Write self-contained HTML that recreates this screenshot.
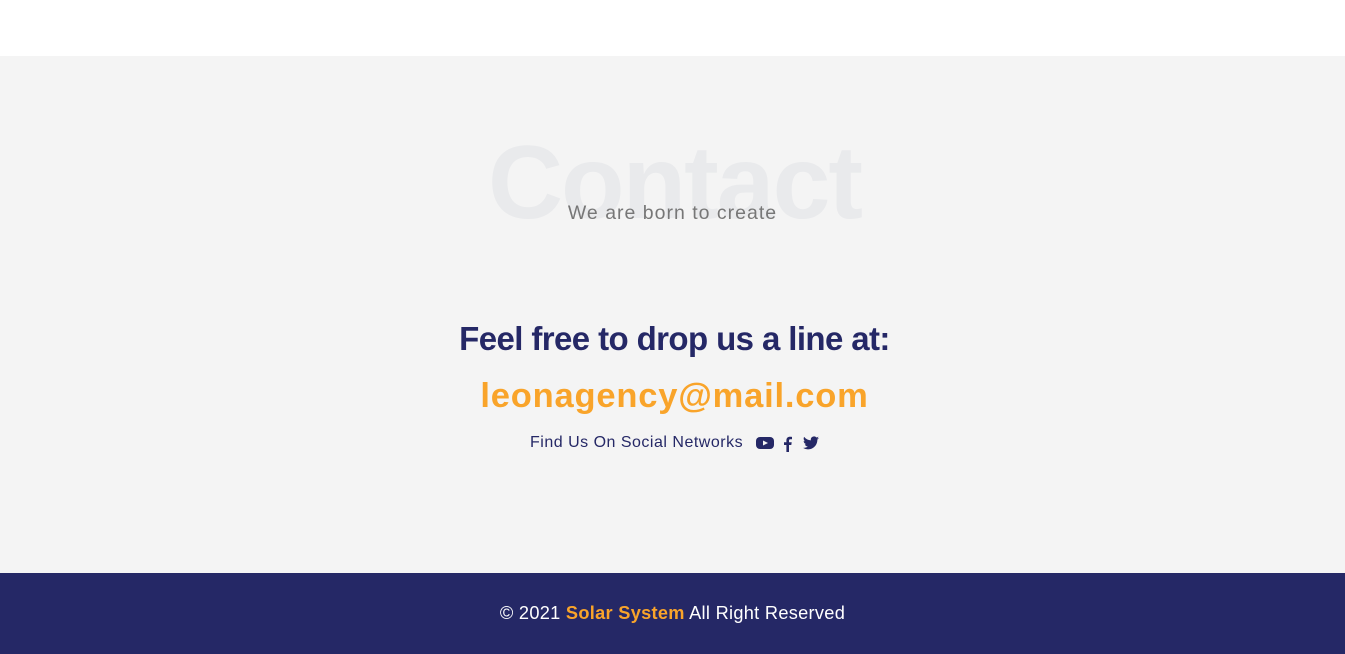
<!DOCTYPE html>
<html><head><style>
body{margin:0;width:1345px;height:654px;overflow:hidden;background:#fff;font-family:"Liberation Sans",sans-serif}
.sec{position:absolute;top:56px;left:0;width:1345px;height:517px;background:#f4f4f4}
.big{position:absolute;top:123px;left:0;width:1345px;text-align:center;font-size:104px;font-weight:bold;color:#e9eaec;letter-spacing:-2px;line-height:120px;padding-left:4px;box-sizing:border-box}
.sub{position:absolute;top:202px;left:0;width:1345px;text-align:center;font-size:19.5px;color:#777;letter-spacing:1px}
.h{position:absolute;top:320px;left:0;width:1345px;text-align:center;font-size:33px;font-weight:bold;color:#252866;letter-spacing:-0.6px;padding-left:4px;box-sizing:border-box}
.m{position:absolute;top:377px;left:0;width:1345px;text-align:center;font-size:34.5px;font-weight:bold;color:#f9a42a;letter-spacing:0.8px;padding-left:4px;box-sizing:border-box}
.s{position:absolute;top:434px;left:530px;font-size:16px;color:#252866;letter-spacing:0.5px;white-space:nowrap}
.ic{position:absolute;top:436px}
.f{position:absolute;top:573px;left:0;width:1345px;height:81px;background:#252866;color:#fff;text-align:center;font-size:18.2px;line-height:80px;letter-spacing:0.3px}
.f b{color:#f9a42a}
</style></head><body>
<div class="sec"></div>
<div class="big">Contact</div>
<div class="sub">We are born to create</div>
<div class="h">Feel free to drop us a line at:</div>
<div class="m">leonagency@mail.com</div>
<div class="s">Find Us On Social Networks</div>
<svg class="ic" style="left:756px" width="18" height="14" viewBox="0 0 18 14"><rect x="0" y="1" width="18" height="12" rx="4" fill="#252866"/><path d="M7 4.5 L12 7 L7 9.5Z" fill="#f4f4f4"/></svg>
<svg class="ic" style="left:783px" width="9" height="16" viewBox="0 0 9 16"><path d="M6 16V9h2.3l.4-2.7H6V4.6c0-.8.3-1.3 1.4-1.3H9V.9C8.6.8 7.8.7 6.9.7 4.9.7 3.4 1.9 3.4 4.2v2.1H1V9h2.4v7z" fill="#252866"/></svg>
<svg class="ic" style="left:803px" width="16" height="14" viewBox="0 0 24 20"><path d="M24 2.4a10 10 0 0 1-2.8.8A4.9 4.9 0 0 0 23.3.5a9.8 9.8 0 0 1-3.1 1.2A4.9 4.9 0 0 0 11.8 6 14 14 0 0 1 1.7.9a4.9 4.9 0 0 0 1.5 6.6A4.9 4.9 0 0 1 1 6.9a4.9 4.9 0 0 0 3.9 4.8 4.9 4.9 0 0 1-2.2.1 4.9 4.9 0 0 0 4.6 3.4A9.9 9.9 0 0 1 0 17.3 14 14 0 0 0 7.5 19.5c9.1 0 14-7.5 14-14v-.6A10 10 0 0 0 24 2.4z" fill="#252866"/></svg>
<div class="f">© 2021 <b>Solar System</b> All Right Reserved</div>
</body></html>
